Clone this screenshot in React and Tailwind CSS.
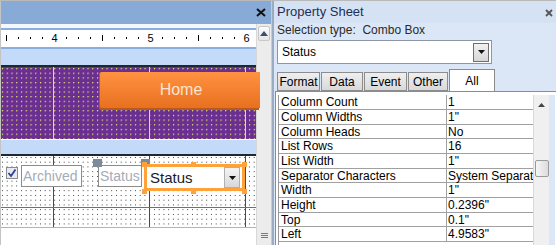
import React from "react";

const rows = [
  ["Column Count", "1"],
  ["Column Widths", "1\""],
  ["Column Heads", "No"],
  ["List Rows", "16"],
  ["List Width", "1\""],
  ["Separator Characters", "System Separator"],
  ["Width", "1\""],
  ["Height", "0.2396\""],
  ["Top", "0.1\""],
  ["Left", "4.9583\""],
];

function Ruler() {
  const marks = [];
  for (let i = 0; i < 21; i++) {
    const x = 5 + i * 12;
    const mod = i % 8;
    if (mod === 4) {
      const n = 4 + Math.floor(i / 8);
      marks.push(
        <span key={i} className="absolute top-[2px] text-[11px] leading-[13px] text-black -translate-x-1/2" style={{ left: x + 0.5 }}>
          {n}
        </span>
      );
    } else if (mod === 0) {
      marks.push(<span key={i} className="absolute top-[5px] w-[1px] h-[6px] bg-black" style={{ left: x }} />);
    } else {
      marks.push(<span key={i} className="absolute top-[7px] w-[1px] h-[2px] bg-black" style={{ left: x }} />);
    }
  }
  return <div className="relative h-[17px] bg-white">{marks}</div>;
}

export default function App() {
  return (
    <div className="flex w-[556px] h-[245px] overflow-hidden bg-[#c6ccd6] font-['Liberation_Sans',sans-serif] border-t border-[#b9b9b9]">
      {/* Left designer panel */}
      <div className="flex flex-col w-[271px] shrink-0 border-l border-[#c4c4c4]">
        <div className="relative h-[23px] bg-[#87aad6] shrink-0">
          <svg className="absolute left-[255px] top-[7px]" width="10" height="9" viewBox="0 0 10 9">
            <path d="M1 1 L9 8 M9 1 L1 8" stroke="#111" strokeWidth="2" />
          </svg>
        </div>
        <div className="flex flex-1 min-h-0">
          <div className="flex flex-col w-[255px] shrink-0 bg-white">
            <div className="h-[4px] bg-[#f4f8fd]" />
            <div className="h-[2px] bg-[#88aee3]" />
            <Ruler />
            <div className="h-[2px] bg-[#88aee3]" />
            <div className="h-[16px] bg-[#c3dbf8]" />
            <div className="h-[2px] bg-[#1f2732]" />
            {/* Purple header section */}
            <div className="relative h-[72px] bg-[#6b2f92] bg-[radial-gradient(circle_at_1.5px_1.5px,#e8ee6c_0.7px,transparent_0.95px)] bg-size-[4.75px_4.7px]">
              <div className="absolute left-[52px] top-0 bottom-0 w-[1px] bg-[#cfe3a0]" />
              <div className="absolute left-[148px] top-0 bottom-0 w-[1px] bg-[#cfe3a0]" />
              <div className="absolute left-[244px] top-0 bottom-0 w-[1px] bg-[#cfe3a0]" />
              <div className="absolute left-[98px] top-[5px] w-[160px] h-[38px] bg-[#b85a1c] rounded-l-[2px]" />
              <div className="absolute left-[99px] top-[5px] w-[160px] h-[36px] rounded-l-[2px] bg-linear-to-b from-[#ff9240] to-[#e8701f] flex items-center justify-center">
                <span className="text-[16px] text-[#fbe5d0] pl-[2px]">Home</span>
              </div>
            </div>
            <div className="h-[1px] bg-white" />
            <div className="h-[14px] bg-[#c3dbf8]" />
            <div className="h-[2px] bg-[#1f2732]" />
            {/* Detail section */}
            <div className="relative h-[71px] bg-white bg-[radial-gradient(circle_at_1.5px_1.5px,#333_0.55px,transparent_0.8px)] bg-size-[4.75px_4.75px]">
              <div className="absolute left-[52px] top-0 bottom-0 w-[1px] bg-[#4a4a4a]" />
              <div className="absolute left-[148px] top-0 bottom-0 w-[1px] bg-[#4a4a4a]" />
              <div className="absolute left-[244px] top-0 bottom-0 w-[1px] bg-[#4a4a4a]" />
              <div className="absolute left-0 right-0 top-[51px] h-[1px] bg-[#707070]" />
              {/* checkbox */}
              <div className="absolute left-[5px] top-[11px] w-[12px] h-[12px] border border-[#8a8a8a] bg-[#e8eaf2] flex items-center justify-center">
                <svg width="10" height="10" viewBox="0 0 10 10">
                  <path d="M1.5 5 L4 8 L8.5 1.5" stroke="#2a3f9a" strokeWidth="1.8" fill="none" />
                </svg>
              </div>
              {/* Archived label */}
              <div className="absolute left-[20px] top-[9px] w-[61px] h-[22px] border border-[#8c8c8c] bg-white flex items-center overflow-hidden">
                <span className="text-[14px] leading-[18px] text-[#a5abb8] pl-[1px] whitespace-nowrap">Archived</span>
              </div>
              {/* Status label */}
              <div className="absolute left-[97px] top-[9px] w-[44px] h-[22px] border border-[#8c8c8c] bg-white flex items-center overflow-hidden">
                <span className="text-[14px] leading-[18px] text-[#a5abb8] pl-[1px] whitespace-nowrap">Status</span>
              </div>
              <div className="absolute left-[92px] top-[3px] w-[9px] h-[8px] bg-[#7c8b9c]" />
              <div className="absolute left-[140px] top-[3px] w-[9px] h-[8px] bg-[#7c8b9c]" />
              {/* Combo selection */}
              <div className="absolute left-[143px] top-[8px] w-[101px] h-[27px] border-[3px] border-[#ffa23a] bg-white flex items-center">
                <span className="text-[15px] leading-[18px] text-[#1a1a2a] pl-[3px] flex-1">Status</span>
                <div className="w-[16px] h-[21px] bg-linear-to-b from-[#f4f4f4] to-[#d8d8d8] border border-[#b0b0b0] mr-[2px] flex items-center justify-center">
                  <svg width="7" height="4" viewBox="0 0 7 4"><path d="M0 0 H7 L3.5 4 Z" fill="#111" /></svg>
                </div>
              </div>
              <div className="absolute left-[190px] top-[6px] w-[5px] h-[5px] bg-[#ffa23a]" />
              <div className="absolute left-[190px] top-[33px] w-[5px] h-[5px] bg-[#ffa23a]" />
              <div className="absolute left-[141px] top-[6px] w-[5px] h-[5px] bg-[#ffa23a]" />
              <div className="absolute left-[241px] top-[6px] w-[5px] h-[5px] bg-[#ffa23a]" />
              <div className="absolute left-[141px] top-[33px] w-[5px] h-[5px] bg-[#ffa23a]" />
              <div className="absolute left-[241px] top-[33px] w-[5px] h-[5px] bg-[#ffa23a]" />
            </div>
            <div className="h-[1px] bg-[#b4b4b4]" />
            <div className="flex-1 bg-white" />
          </div>
          {/* vertical scrollbar */}
          <div className="flex flex-col w-[15px] shrink-0 bg-[#ececec] border-l border-[#d8d8d8]">
            <div className="mt-[2px] mx-[1px] h-[15px] rounded-[2px] border border-[#c8c8c8] bg-linear-to-b from-[#fbfbfb] to-[#e6e6e6] flex items-center justify-center">
              <svg width="8" height="5" viewBox="0 0 8 5"><path d="M4 0 L8 5 H0 Z" fill="#3d4f6a" /></svg>
            </div>
            <div className="flex-1" />
            <div className="mb-[7px] flex flex-col items-center gap-[1px]">
              <div className="w-[7px] h-[1px] bg-[#7a7a7a]" />
              <div className="w-[7px] h-[1px] bg-[#7a7a7a]" />
              <div className="w-[7px] h-[1px] bg-[#7a7a7a]" />
            </div>
          </div>
        </div>
      </div>

      {/* Property sheet */}
      <div className="flex flex-col w-[285px] shrink-0 ml-[1px] border-l-2 border-[#9aabc2] bg-[#dbe7f6] text-[12px]">
        <div className="relative h-[22px] flex items-center pl-[3px] bg-[#d5e2f3] shrink-0">
          <span className="text-[13px] text-[#1f2f55]">Property Sheet</span>
          <svg className="absolute right-[4px] top-[8px]" width="8" height="8" viewBox="0 0 8 8">
            <path d="M1 1 L7 7 M7 1 L1 7" stroke="#555" strokeWidth="1.8" />
          </svg>
        </div>
        <div className="h-[15px] pl-[3px] text-[#2a2a2a] leading-[15px]">Selection type:&nbsp; Combo Box</div>
        <div className="mt-[2px] ml-[3px] w-[215px] h-[24px] border border-[#8c96a4] bg-white flex items-center">
          <span className="pl-[4px] flex-1 text-black">Status</span>
          <div className="w-[16px] h-[19px] mr-[2px] border border-[#6e6e6e] bg-linear-to-b from-[#f2f2f2] to-[#d6d6d6] flex items-center justify-center">
            <svg width="7" height="4" viewBox="0 0 7 4"><path d="M0 0 H7 L3.5 4 Z" fill="#111" /></svg>
          </div>
        </div>
        <div className="mt-[5px] ml-[3px] flex items-end h-[22px]">
          <div className="h-[19px] w-[43px] border border-[#8c8c8c] bg-linear-to-b from-[#efefef] to-[#d9d9d9] flex items-center justify-center text-black">Format</div>
          <div className="h-[19px] w-[42px] ml-[1px] border border-[#8c8c8c] bg-linear-to-b from-[#efefef] to-[#d9d9d9] flex items-center justify-center text-black">Data</div>
          <div className="h-[19px] w-[43px] ml-[1px] border border-[#8c8c8c] bg-linear-to-b from-[#efefef] to-[#d9d9d9] flex items-center justify-center text-black">Event</div>
          <div className="h-[19px] w-[40px] ml-[1px] border border-[#8c8c8c] bg-linear-to-b from-[#efefef] to-[#d9d9d9] flex items-center justify-center text-black">Other</div>
          <div className="h-[22px] w-[46px] ml-[1px] border border-b-0 border-[#8c8c8c] bg-white flex justify-center pt-[2px] text-black">All</div>
        </div>
        <div className="flex flex-1 min-h-0 ml-[1px] border-l border-t border-[#8c8c8c] bg-white pl-[2px] pt-[3px]">
          <div className="flex flex-col w-[255px] shrink-0 border-l border-[#9a9a9a]">
            {rows.map(([k, v], i) => (
              <div key={k} className={`flex ${i % 3 === 2 ? "h-[14px]" : "h-[15px]"} border-b border-[#a0a0a0] shrink-0 items-center text-black`}>
                <div className="w-[168px] h-full flex items-center pl-[2px] border-r border-[#a0a0a0] whitespace-nowrap overflow-hidden">{k}</div>
                <div className="flex-1 pl-[1px] whitespace-nowrap overflow-hidden">{v}</div>
              </div>
            ))}
          </div>
          <div className="relative w-[16px] shrink-0 bg-[#f0f0f0] border-l border-[#d8d8d8]">
            <svg className="absolute left-[4px] top-[8px]" width="7" height="4" viewBox="0 0 7 4"><path d="M3.5 0 L7 4 H0 Z" fill="#444" /></svg>
            <div className="absolute left-[1px] top-[65px] w-[14px] h-[17px] rounded-[2px] border border-[#9a9a9a] bg-linear-to-r from-[#f6f6f6] to-[#dcdcdc]" />
          </div>
          <div className="w-[6px] shrink-0 bg-[#dbe7f6]" />
        </div>
      </div>
    </div>
  );
}
